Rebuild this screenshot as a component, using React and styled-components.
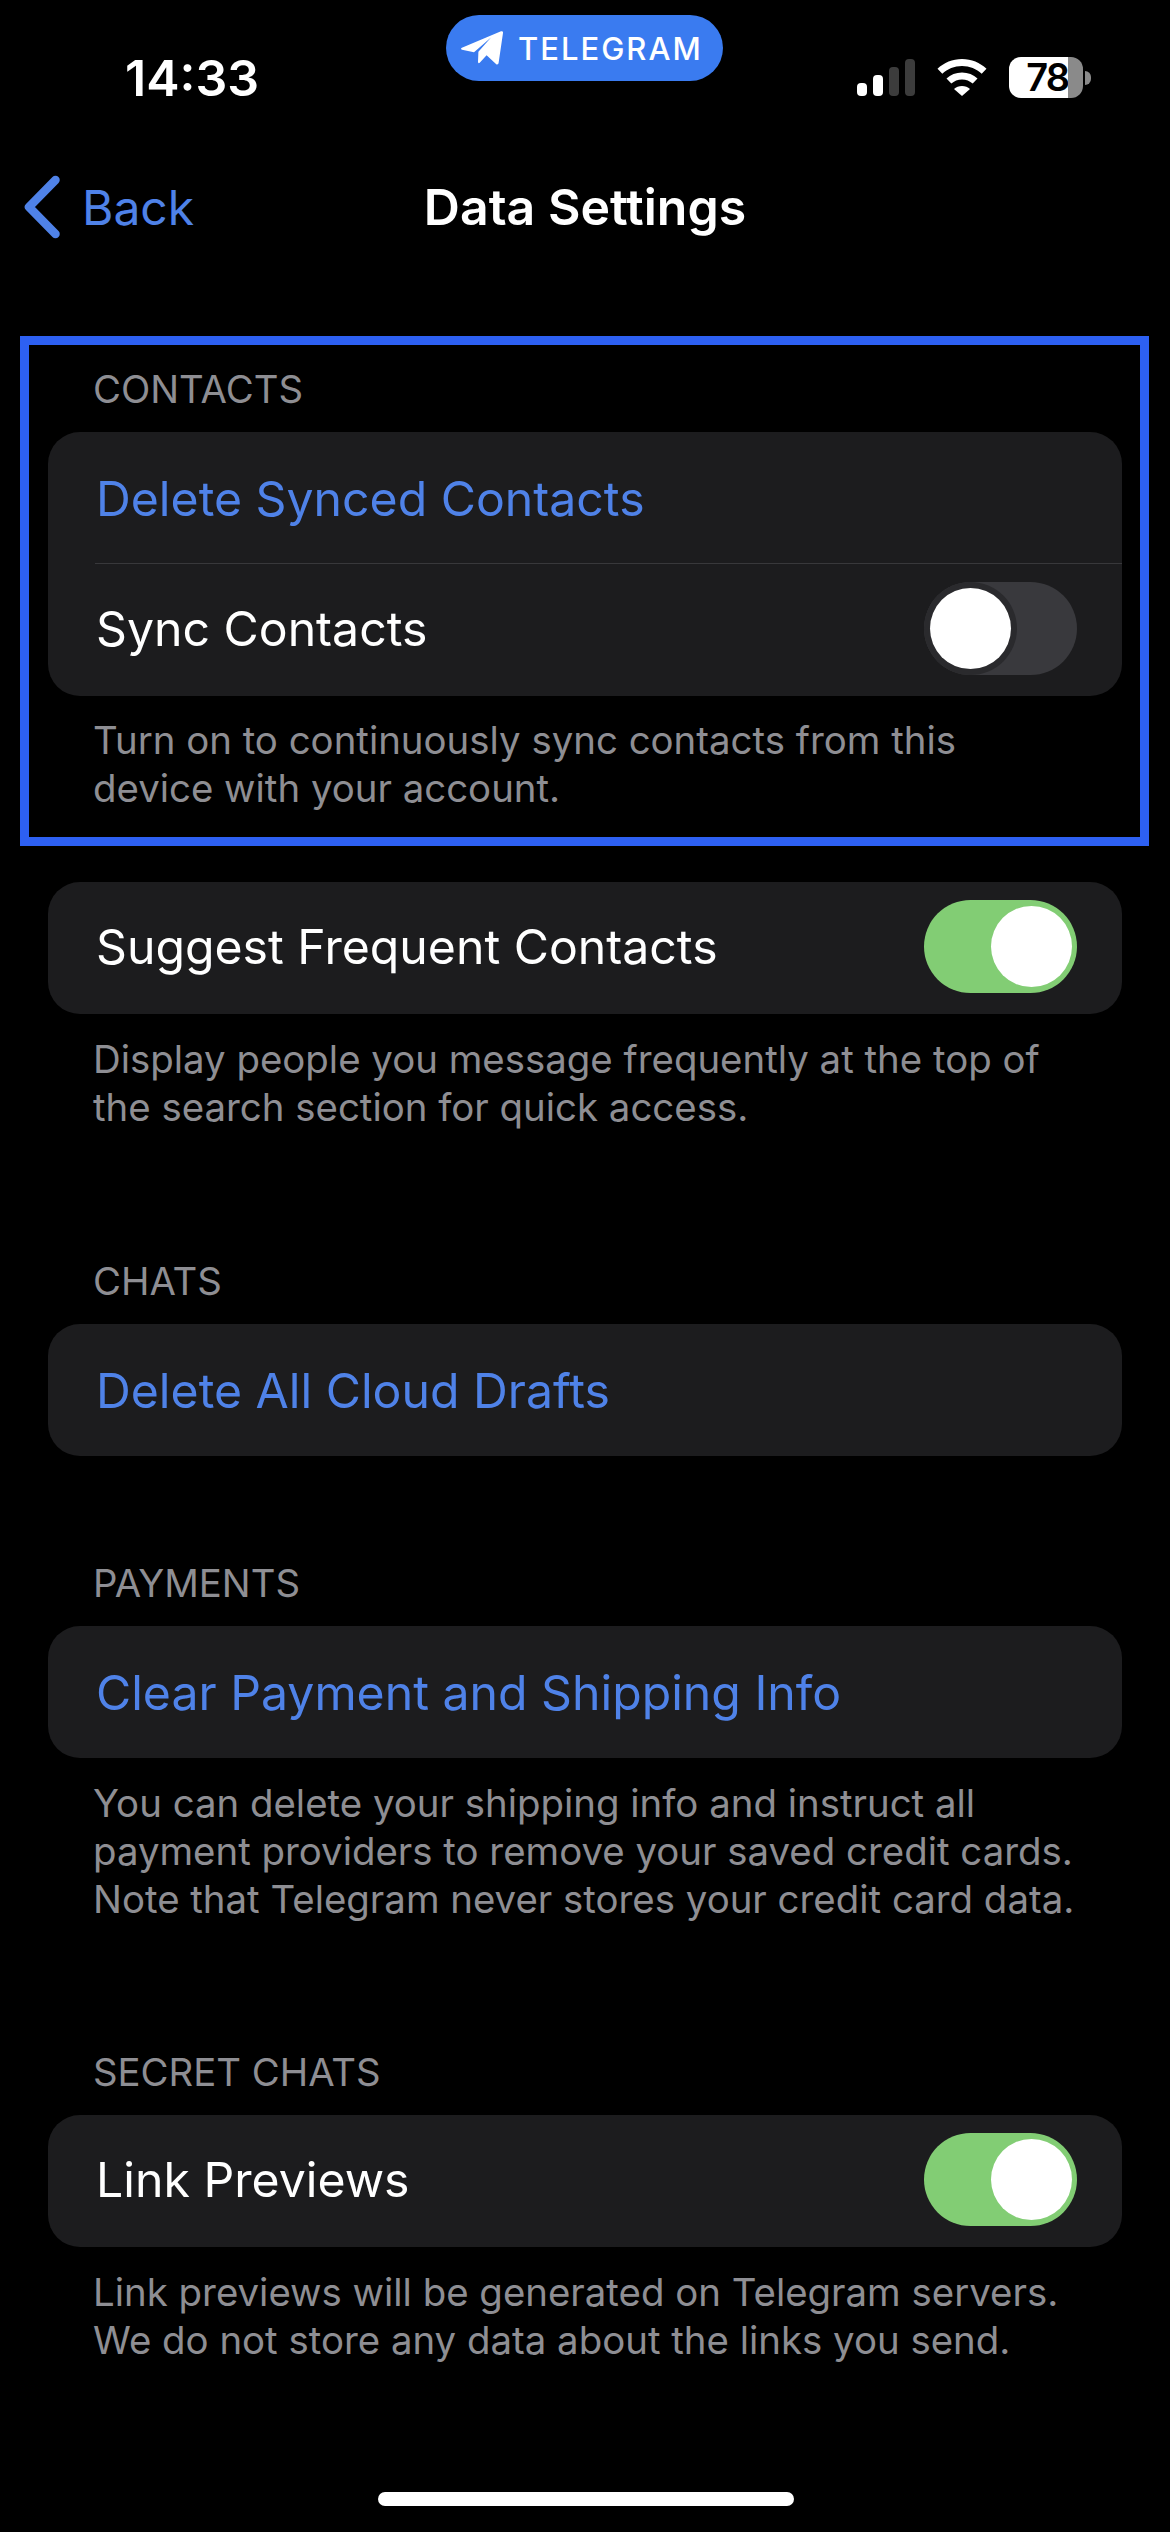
import React from "react"
import styled, { createGlobalStyle } from "styled-components"

const GlobalStyle = createGlobalStyle`
  html, body {
    margin: 0;
    padding: 0;
    background: #000;
  }
  * {
    box-sizing: border-box;
  }
`

function TelegramIcon() {
  return (
    <svg width="42" height="34" viewBox="0 0 42 34" fill="#fff">
      <path d="M40 .3c1.3-.5 2.2.3 2 1.7l-4.4 30c-.2 1.4-1.6 1.9-2.6.9l-9.4-8.6-6.9 7.4c-.8.8-1.700.4-1.700-.6l.4-10.300L30 6.500 13 21.300 1 18.700c-1.300-.4-1.300-1.500-.1-2z" />
    </svg>
  )
}

function SignalIcon() {
  return (
    <svg width="58" height="37" viewBox="0 0 58 37">
      <rect x="0" y="24" width="10" height="13" rx="4" fill="#fff" />
      <rect x="16" y="16" width="10" height="21" rx="4" fill="#fff" />
      <rect x="32" y="8" width="10" height="29" rx="4" fill="#3c3c3c" />
      <rect x="48" y="0" width="10" height="37" rx="4" fill="#3c3c3c" />
    </svg>
  )
}

function WifiIcon() {
  return (
    <svg width="50" height="37" viewBox="0 0 50 37" fill="#fff">
      <path d="M25 0C15.500 0 7 3.700.5 9.700l4.800 5.100C10.500 10 17.400 7 25 7s14.500 3 19.700 7.800l4.800-5.100C43 3.700 34.500 0 25 0z" />
      <path d="M25 13.500c-6 0-11.400 2.300-15.500 6l4.800 5.100c2.800-2.500 6.600-4.100 10.700-4.100s7.900 1.600 10.700 4.100l4.800-5.100c-4.100-3.700-9.500-6-15.500-6z" />
      <path d="M25 27c-3.100 0-5.900 1.100-8 3l8 7 8-7c-2.100-1.900-4.900-3-8-3z" />
    </svg>
  )
}

function BackChevron() {
  return (
    <svg width="36" height="64" viewBox="0 0 36 64" fill="none">
      <path d="M31.500 5 5 32l26.500 27" stroke="#4f82e8" strokeWidth="8.500" strokeLinecap="round" strokeLinejoin="round" />
    </svg>
  )
}

function Toggle({ on }) {
  return (
    <Track $on={on}>
      <Thumb $on={on} />
    </Track>
  )
}

function App() {
  return (
    <Page>
      <GlobalStyle />
      <StatusBar>
        <Time>14:33</Time>
        <TelegramPill>
          <TelegramIcon />
          <span>TELEGRAM</span>
        </TelegramPill>
        <StatusIcons>
          <SignalIcon />
          <WifiIcon />
          <Battery>
            <BatteryLevel>78</BatteryLevel>
            <BatteryEmpty />
            <BatteryNub />
          </Battery>
        </StatusIcons>
      </StatusBar>

      <NavBar>
        <BackButton>
          <BackChevron />
          <span>Back</span>
        </BackButton>
        <NavTitle>Data Settings</NavTitle>
      </NavBar>

      <HighlightBox>
        <SectionHeader>CONTACTS</SectionHeader>
        <Card>
          <Row>
            <ActionLabel>Delete Synced Contacts</ActionLabel>
          </Row>
          <Divider />
          <Row $lift={3}>
            <Label>Sync Contacts</Label>
            <Toggle />
          </Row>
        </Card>
        <SectionFooter $gap={20}>
          Turn on to continuously sync contacts from this
          <br />
          device with your account.
        </SectionFooter>
      </HighlightBox>

      <Section $gap={36}>
        <Card>
          <Row $lift={3}>
            <Label>Suggest Frequent Contacts</Label>
            <Toggle on />
          </Row>
        </Card>
        <SectionFooter>
          Display people you message frequently at the top of
          <br />
          the search section for quick access.
        </SectionFooter>
      </Section>

      <Section $gap={126}>
        <SectionHeader>CHATS</SectionHeader>
        <Card>
          <Row>
            <ActionLabel>Delete All Cloud Drafts</ActionLabel>
          </Row>
        </Card>
      </Section>

      <Section $gap={103}>
        <SectionHeader>PAYMENTS</SectionHeader>
        <Card>
          <Row>
            <ActionLabel>Clear Payment and Shipping Info</ActionLabel>
          </Row>
        </Card>
        <SectionFooter>
          You can delete your shipping info and instruct all
          <br />
          payment providers to remove your saved credit cards.
          <br />
          Note that Telegram never stores your credit card data.
        </SectionFooter>
      </Section>

      <Section $gap={125}>
        <SectionHeader>SECRET CHATS</SectionHeader>
        <Card>
          <Row $lift={3}>
            <Label>Link Previews</Label>
            <Toggle on />
          </Row>
        </Card>
        <SectionFooter>
          Link previews will be generated on Telegram servers.
          <br />
          We do not store any data about the links you send.
        </SectionFooter>
      </Section>

      <HomeIndicator />
    </Page>
  )
}

export default App

const Page = styled.div`
  position: relative;
  width: 1170px;
  height: 2532px;
  overflow: hidden;
  background: #000;
  color: #fff;
  font-family: Inter, "Liberation Sans", sans-serif;
`

const StatusBar = styled.header`
  display: flex;
  align-items: flex-start;
  justify-content: space-between;
  height: 158px;
  padding: 57px 79px 0 125px;
`

const Time = styled.div`
  font-size: 50px;
  font-weight: 600;
  line-height: 42px;
`

const TelegramPill = styled.div`
  position: absolute;
  top: 15px;
  left: 446px;
  display: flex;
  align-items: center;
  gap: 15px;
  width: 277px;
  height: 66px;
  padding-left: 15px;
  border-radius: 33px;
  background: #3a7bf0;
  font-size: 31px;
  font-weight: 500;
  letter-spacing: 2px;
`

const StatusIcons = styled.div`
  display: flex;
  align-items: center;
  gap: 22px;
  height: 41px;
`

const Battery = styled.div`
  display: flex;
  align-items: center;
`

const BatteryLevel = styled.div`
  width: 59px;
  height: 41px;
  border-radius: 12px 0 0 12px;
  background: #fff;
  color: #000;
  font-size: 38px;
  font-weight: 600;
  line-height: 41px;
  letter-spacing: -2px;
  text-align: right;
`

const BatteryEmpty = styled.div`
  width: 15px;
  height: 41px;
  margin-right: 2px;
  border-radius: 0 12px 12px 0;
  background: #8a8a8a;
`

const BatteryNub = styled.div`
  width: 6px;
  height: 14px;
  border-radius: 0 7px 7px 0;
  background: #8a8a8a;
`

const NavBar = styled.nav`
  position: relative;
  display: flex;
  align-items: center;
  justify-content: center;
  height: 98px;
`

const BackButton = styled.div`
  position: absolute;
  top: 17px;
  left: 24px;
  display: flex;
  align-items: center;
  gap: 22px;
  color: #4f82e8;
  font-size: 48px;
`

const NavTitle = styled.h1`
  margin: 0;
  font-size: 50px;
  font-weight: 600;
`

const HighlightBox = styled.section`
  width: 1129px;
  margin: 80px 0 0 20px;
  padding: 20px 18px 25px 19px;
  border: 9px solid #2d60f2;
`

const Section = styled.section`
  margin: ${props => props.$gap}px 48px 0;
`

const SectionHeader = styled.div`
  margin-bottom: 19px;
  padding-left: 45px;
  color: #8e8e93;
  font-size: 38.3px;
  line-height: 48px;
`

const SectionFooter = styled.div`
  margin-top: ${props => props.$gap ?? 21}px;
  padding-left: 45px;
  color: #8e8e93;
  font-size: 38.4px;
  line-height: 48px;
`

const Card = styled.div`
  overflow: hidden;
  border-radius: 32px;
  background: #1c1c1e;
`

const Row = styled.div`
  display: flex;
  align-items: center;
  justify-content: space-between;
  height: 132px;
  padding: 0 45px ${props => props.$lift || 0}px 48px;
`

const Divider = styled.div`
  height: 1px;
  margin: -1px 0 0 47px;
  background: #38383b;
`

const Label = styled.span`
  font-size: 48.2px;
`

const ActionLabel = styled(Label)`
  color: #4f82e8;
`

const Track = styled.div`
  display: flex;
  align-items: center;
  justify-content: ${props => (props.$on ? "flex-end" : "flex-start")};
  width: 153px;
  height: 93px;
  padding: 0 ${props => (props.$on ? 5 : 6)}px;
  border-radius: 47px;
  background: ${props => (props.$on ? "#82cd74" : "#39393d")};
`

const Thumb = styled.div`
  width: 81px;
  height: 81px;
  border-radius: 50%;
  background: #fff;
  box-shadow: ${props => (props.$on ? "none" : "0 0 0 6px #2a2a2d")};
`

const HomeIndicator = styled.div`
  position: absolute;
  bottom: 26px;
  left: 378px;
  width: 416px;
  height: 14px;
  border-radius: 7px;
  background: #fff;
`
